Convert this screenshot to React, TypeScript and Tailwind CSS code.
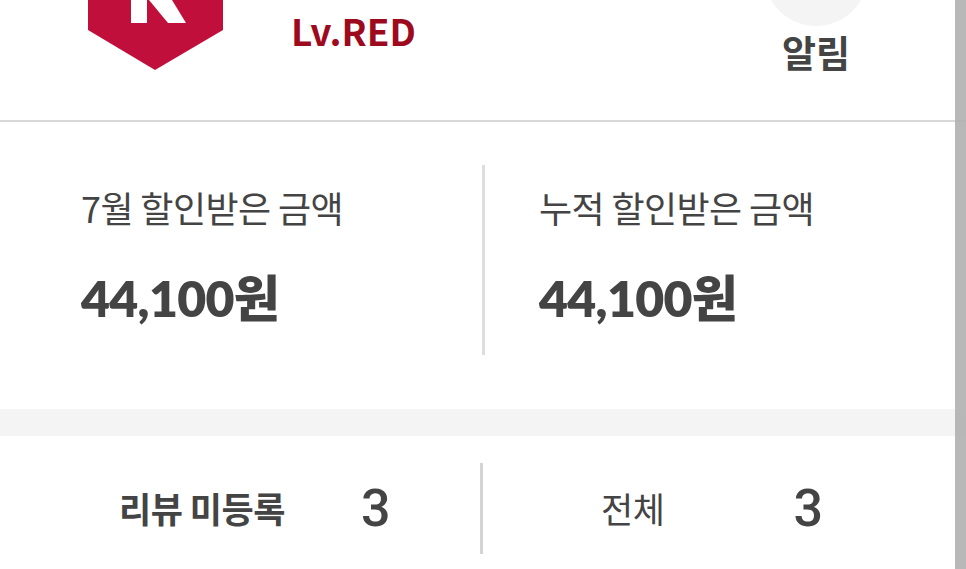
const font = { fontFamily: '"Noto Sans CJK KR", "Noto Sans", sans-serif' };

function Stat({ label }: { label: string }) {
  return (
    <div>
      <div className="pt-[20px] text-[36px] leading-[44px] text-[#444] font-normal tracking-[-0.6px]">{label}</div>
      <div className="mt-[39px] text-[50px] leading-[60px] font-extrabold text-[#444] tracking-[-0.7px] font-['Lato','Noto_Sans_CJK_KR',sans-serif]">44,100원</div>
    </div>
  );
}

export default function App() {
  return (
    <div className="relative w-[966px] h-[569px] overflow-hidden bg-white" style={font}>
      <div className="w-[966px]">
        <header className="relative h-[122px] border-b-2 border-[#d8d8d8] overflow-hidden flex items-start">
          <svg className="ml-[88px] shrink-0" width="136" height="71" viewBox="0 0 136 71">
            <polygon points="0,0 135,0 135,30 67,70 0,30" fill="#c10f3c" />
            <polygon points="43,0 59,0 59,23 43,23" fill="#fff" />
            <polygon points="61,0 84,0 98,23 80,23" fill="#fff" />
          </svg>
          <div className="ml-[67px] mt-[8px] text-[37px] leading-[44px] font-bold text-[#9d0a1e]">Lv.RED</div>
          <div className="ml-auto mr-[98px] w-[104px] flex flex-col items-center">
            <div className="shrink-0 w-[104px] h-[104px] mt-[-78px] rounded-full bg-[#f4f4f4]" />
            <div className="mt-[3px] text-[37px] leading-[46px] font-bold text-[#444]">알림</div>
          </div>
        </header>
        <section className="h-[287px] pt-[43px]">
          <div className="flex h-[190px]">
            <div className="w-[485px] pl-[81px] border-r-[3px] border-[#dedede]">
              <Stat label="7월 할인받은 금액" />
            </div>
            <div className="flex-1 pl-[54px]">
              <Stat label="누적 할인받은 금액" />
            </div>
          </div>
        </section>
        <div className="h-[27px] bg-[#f4f4f4]" />
        <section className="h-[133px] pt-[27px]">
          <div className="flex h-[91px] items-center">
            <div className="w-[483px] h-full border-r-[3px] border-[#d4d4d4] flex items-center pl-[119px]">
              <span className="text-[35px] font-bold text-[#444] tracking-[-0.5px]">리뷰 미등록</span>
              <span className="ml-[76px] text-[52px] leading-[60px] font-medium text-[#444] font-['Roboto',sans-serif]">3</span>
            </div>
            <div className="flex-1 h-full flex items-center pl-[118px]">
              <span className="text-[35px] font-normal text-[#444] tracking-[-0.5px]">전체</span>
              <span className="ml-[129px] text-[52px] leading-[60px] font-medium text-[#444] font-['Roboto',sans-serif]">3</span>
            </div>
          </div>
        </section>
      </div>
      <div className="absolute right-0 top-0 w-[11px] h-[569px] bg-[#b0b0b0]/90" />
    </div>
  );
}
